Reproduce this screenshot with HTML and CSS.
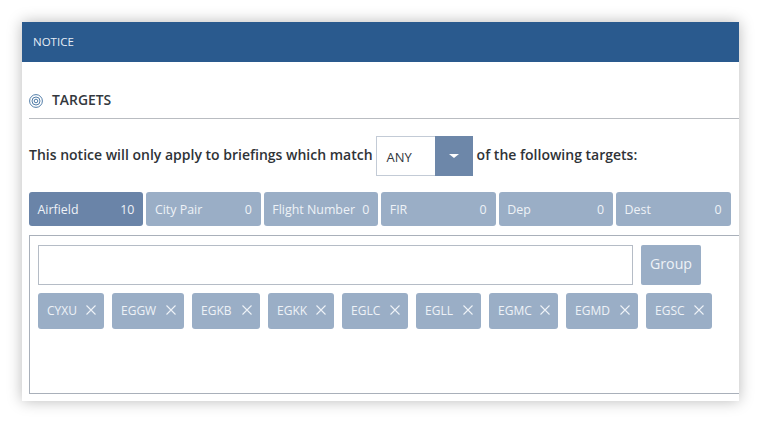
FILE: index.html
```html
<!DOCTYPE html>
<html lang="en">
<head>
    <meta charset="UTF-8">
    <title>Notice</title>
    <link rel="stylesheet" href="styles.css">
</head>
<body>
<div class="card">
    <div class="header">NOTICE</div>
    <div class="content">
        <div class="section-title">
            <svg class="target-icon" width="14" height="14" viewBox="0 0 14 14" fill="none">
                <circle cx="7" cy="7" r="6.4"/>
                <circle cx="7" cy="7" r="4"/>
                <circle cx="7" cy="7" r="1.8"/>
            </svg>
            <span>TARGETS</span>
        </div>
        <div class="match-line">
            <span class="match-text">This notice will only apply to briefings which match</span>
            <div class="select">
                <div class="select-value">ANY</div>
                <div class="select-arrow"><i></i></div>
            </div>
            <span class="match-text">of the following targets:</span>
        </div>
        <div class="tabs">
            <div class="tab active"><span>Airfield</span><span>10</span></div>
            <div class="tab"><span>City Pair</span><span>0</span></div>
            <div class="tab"><span>Flight Number</span><span>0</span></div>
            <div class="tab"><span>FIR</span><span>0</span></div>
            <div class="tab"><span>Dep</span><span>0</span></div>
            <div class="tab"><span>Dest</span><span>0</span></div>
        </div>
        <div class="panel">
            <div class="input-row">
                <input type="text" class="code-input" value="">
                <div class="group-btn">Group</div>
            </div>
            <div class="chips">
                <div class="chip chip-s">CYXU<svg class="chip-x" viewBox="0 0 10 10"><path d="M0.5 0.5 9.5 9.5M9.5 0.5 0.5 9.5"/></svg></div>
                <div class="chip chip-xl">EGGW<svg class="chip-x" viewBox="0 0 10 10"><path d="M0.5 0.5 9.5 9.5M9.5 0.5 0.5 9.5"/></svg></div>
                <div class="chip chip-m">EGKB<svg class="chip-x" viewBox="0 0 10 10"><path d="M0.5 0.5 9.5 9.5M9.5 0.5 0.5 9.5"/></svg></div>
                <div class="chip chip-s">EGKK<svg class="chip-x" viewBox="0 0 10 10"><path d="M0.5 0.5 9.5 9.5M9.5 0.5 0.5 9.5"/></svg></div>
                <div class="chip chip-s">EGLC<svg class="chip-x" viewBox="0 0 10 10"><path d="M0.5 0.5 9.5 9.5M9.5 0.5 0.5 9.5"/></svg></div>
                <div class="chip chip-xs">EGLL<svg class="chip-x" viewBox="0 0 10 10"><path d="M0.5 0.5 9.5 9.5M9.5 0.5 0.5 9.5"/></svg></div>
                <div class="chip chip-l">EGMC<svg class="chip-x" viewBox="0 0 10 10"><path d="M0.5 0.5 9.5 9.5M9.5 0.5 0.5 9.5"/></svg></div>
                <div class="chip chip-xl">EGMD<svg class="chip-x" viewBox="0 0 10 10"><path d="M0.5 0.5 9.5 9.5M9.5 0.5 0.5 9.5"/></svg></div>
                <div class="chip chip-s">EGSC<svg class="chip-x" viewBox="0 0 10 10"><path d="M0.5 0.5 9.5 9.5M9.5 0.5 0.5 9.5"/></svg></div>
            </div>
        </div>
    </div>
</div>
</body>
</html>
```

FILE: styles.css
```css
html, body {
    margin: 0;
    padding: 0;
    height: 100%;
    background-color: #fff;
    overflow: hidden;
}

body {
    padding: 22px 22px 21px 22px;
    box-sizing: border-box;
    font-family: "Open Sans", "Liberation Sans", sans-serif;
}

.card {
    width: 717px;
    height: 379px;
    background-color: #fff;
    box-shadow: 0 0 14px rgba(0, 0, 0, 0.28);
    overflow: hidden;
}

.header {
    height: 40px;
    line-height: 40px;
    padding-left: 11px;
    background-color: #2a5a8e;
    color: #e6edf5;
    font-size: 11.5px;
}

.content {
    padding-left: 7px;
}

.section-title {
    display: flex;
    align-items: center;
    height: 36px;
    padding-top: 20px;
    border-bottom: 1px solid #b9bcc1;
    color: #33383e;
    font-size: 13.9px;
    font-weight: 600;
}

.section-title span {
    margin-left: 9px;
    margin-bottom: 2px;
}

.target-icon {
    margin-top: 2px;
    stroke: #3f6f9f;
    stroke-width: 0.9;
}

.match-line {
    display: flex;
    align-items: center;
    margin-top: 17px;
    height: 40px;
    color: #2f3337;
    font-size: 14px;
    font-weight: 600;
}

.match-text {
    margin-bottom: 3px;
}

.select {
    display: flex;
    width: 97px;
    height: 40px;
    margin: 0 4px 0 3px;
    box-sizing: border-box;
    border: 1px solid #c3cbd6;
    border-right: 0;
    font-weight: 400;
}

.select-value {
    flex: 1;
    line-height: 40px;
    padding-left: 10px;
    font-size: 13px;
    color: #33383e;
}

.select-arrow {
    width: 38px;
    margin: -1px 0;
    background-color: #6d87a9;
    display: flex;
    align-items: center;
    justify-content: center;
}

.select-arrow i {
    border-top: 4px solid #fff;
    border-left: 5px solid transparent;
    border-right: 5px solid transparent;
}

.tabs {
    display: flex;
    gap: 3px;
    margin-top: 16px;
    width: 701.5px;
}

.tab {
    flex: 1;
    display: flex;
    justify-content: space-between;
    align-items: center;
    height: 34px;
    padding: 0 9px 0 8.5px;
    border-radius: 3px;
    background-color: #9aaec6;
    color: #eef2f7;
    font-size: 12.4px;
}

.tab.active {
    background-color: #6a84a8;
}

.panel {
    margin-top: 9px;
    height: 159px;
    box-sizing: border-box;
    border: 1px solid #a9b0ba;
    border-right: 0;
    padding: 9px 0 0 8px;
}

.input-row {
    display: flex;
    gap: 8px;
}

.code-input {
    width: 595px;
    height: 40px;
    box-sizing: border-box;
    border: 1px solid #b5bcc6;
    outline: none;
    padding: 0;
    margin: 0;
}

.group-btn {
    width: 60px;
    height: 40px;
    line-height: 38px;
    text-align: center;
    border-radius: 2px;
    background-color: #9aaec6;
    color: #eef2f7;
    font-size: 14.2px;
}

.chips {
    display: flex;
    gap: 8.5px;
    margin-top: 8px;
}

.chip {
    display: flex;
    align-items: center;
    justify-content: space-between;
    box-sizing: border-box;
    height: 36px;
    padding: 0 8px 2px 9px;
    border-radius: 3px;
    background-color: #9aaec6;
    color: #eef2f7;
    font-size: 12px;
}

.chip-x {
    width: 10px;
    height: 10px;
    margin-bottom: 1px;
    fill: none;
    stroke: #eef2f7;
    stroke-width: 1.1;
}

.chip-xs { width: 64.5px; }
.chip-s { width: 65.5px; }
.chip-m { width: 67.5px; }
.chip-l { width: 68.5px; }
.chip-xl { width: 71.5px; }
```
